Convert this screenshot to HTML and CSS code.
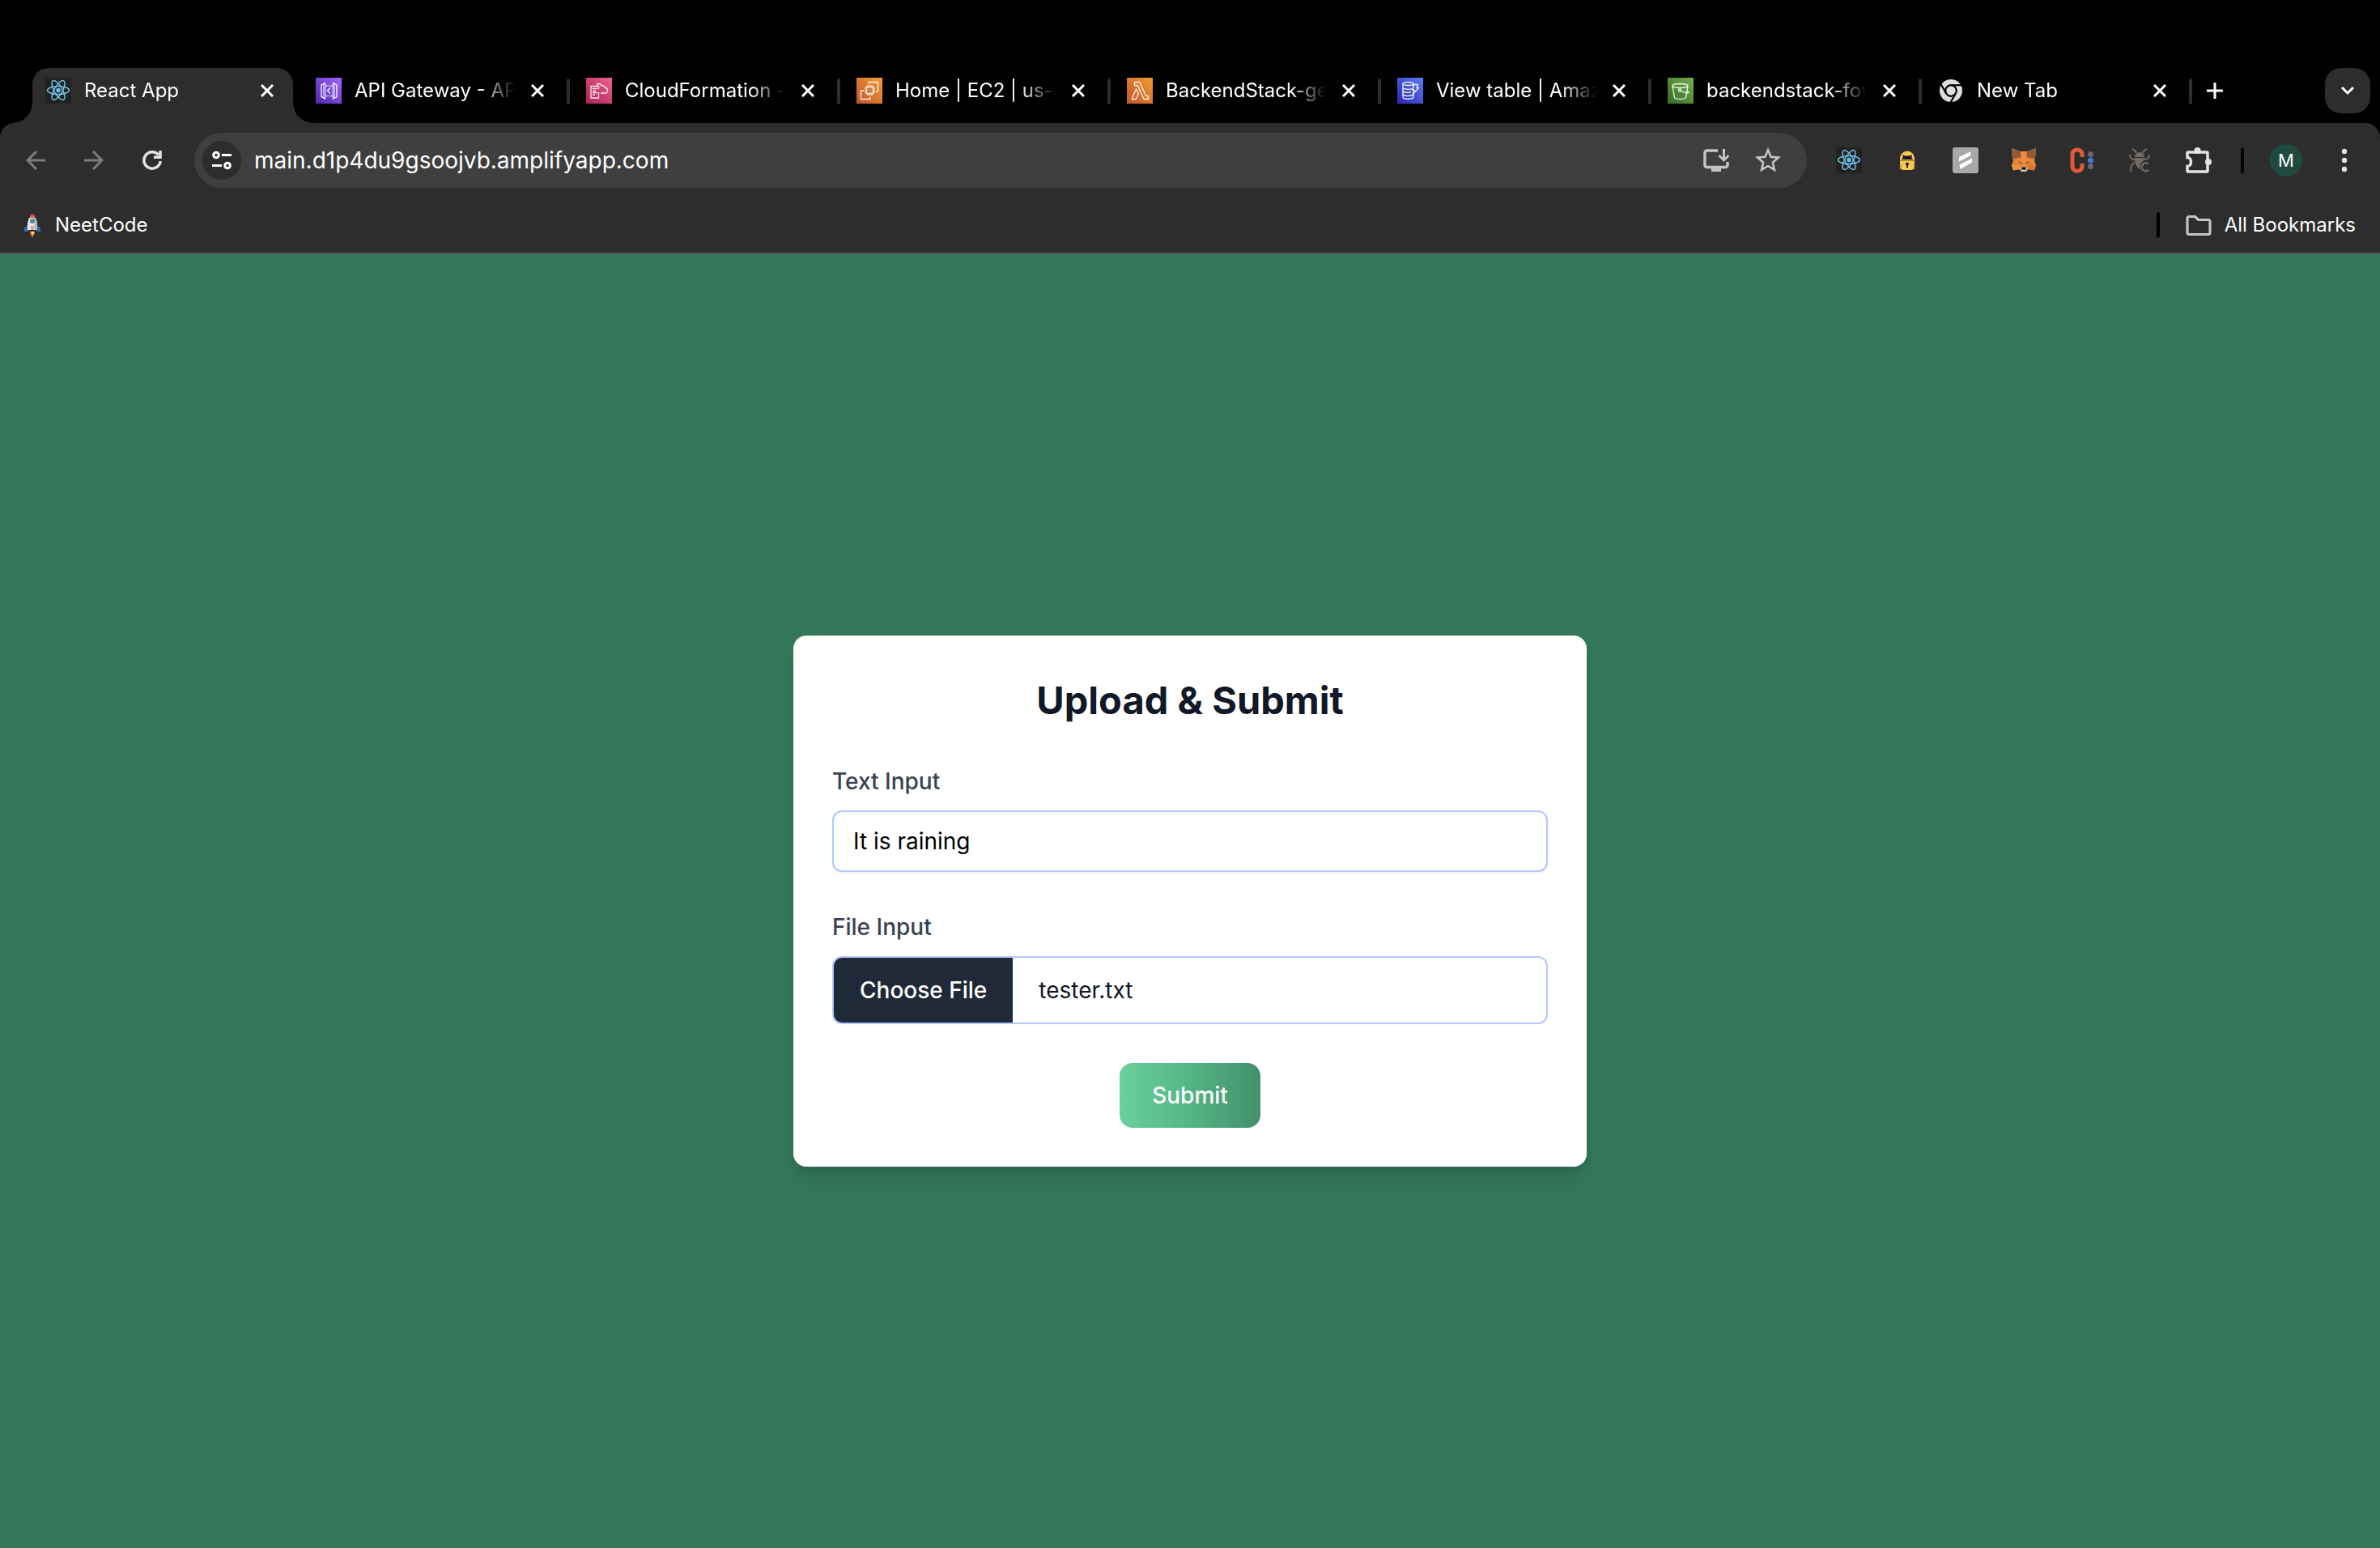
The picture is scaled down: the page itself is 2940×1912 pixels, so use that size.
FILE: index.html
```html
<!DOCTYPE html>
<html lang="en">
<head>
<meta charset="utf-8">
<meta name="viewport" content="width=device-width, initial-scale=1">
<title>React App</title>
<link rel="stylesheet" href="styles.css">
</head>
<body>
<svg class="defs" width="0" height="0" aria-hidden="true">
  <defs>
    <linearGradient id="purple" x1="0" y1="1" x2="1" y2="0"><stop offset="0" stop-color="#4d27a8"/><stop offset="1" stop-color="#a166ff"/></linearGradient>
    <linearGradient id="pink" x1="0" y1="1" x2="1" y2="0"><stop offset="0" stop-color="#a82356"/><stop offset="1" stop-color="#f0608f"/></linearGradient>
    <linearGradient id="orange" x1="0" y1="1" x2="1" y2="0"><stop offset="0" stop-color="#be552e"/><stop offset="1" stop-color="#f79c33"/></linearGradient>
    <linearGradient id="blue" x1="0" y1="1" x2="1" y2="0"><stop offset="0" stop-color="#2e27ad"/><stop offset="1" stop-color="#5a7cfa"/></linearGradient>
    <linearGradient id="green" x1="0" y1="1" x2="1" y2="0"><stop offset="0" stop-color="#356b25"/><stop offset="1" stop-color="#73ad50"/></linearGradient>
    <symbol id="react" viewBox="0 0 32 32">
      <rect width="32" height="32" rx="3" fill="#212121"/>
      <g fill="none" stroke="#6fc3e8" stroke-width="1.500">
        <ellipse cx="16" cy="15.500" rx="13.400" ry="5"/>
        <ellipse cx="16" cy="15.500" rx="13.400" ry="5" transform="rotate(60 16 15.500)"/>
        <ellipse cx="16" cy="15.500" rx="13.400" ry="5" transform="rotate(120 16 15.500)"/>
      </g>
      <circle cx="16" cy="15.500" r="2.700" fill="#6fc3e8"/>
    </symbol>
    <symbol id="cross" viewBox="0 0 16 16"><path d="M1 1 15 15M15 1 1 15" stroke="#fff" stroke-width="3"/></symbol>
  </defs>
</svg>

<header class="browser">
  <nav class="tabs" aria-label="Tabs">
    <div class="tab tab-active">
      <svg class="icon"><use href="#react"/></svg>
      <span class="tab-title">React App</span>
      <button class="tab-close" aria-label="Close tab"><svg class="cross"><use href="#cross"/></svg></button>
    </div>
    <div class="tab">
      <svg class="icon" viewBox="0 0 32 32"><rect width="32" height="32" fill="url(#purple)"/><g fill="none" stroke="#fff" stroke-width="1.300"><path d="M11.500 6.500v19.500l-4.500-2.500V9zM21.500 6.500v19.500l4.500-2.500V9zM18 12.500l-3.500 3.500 3.500 3.500"/><path d="M9.500 8v17M23.500 8v17" stroke-width=".600"/><path d="M13 10h7.500M13 22.500h7.500" stroke-dasharray="1.500 1.500"/></g></svg>
      <span class="tab-title">API Gateway - AP</span>
      <button class="tab-close" aria-label="Close tab"><svg class="cross"><use href="#cross"/></svg></button>
    </div>
    <div class="tab">
      <svg class="icon" viewBox="0 0 32 32"><rect width="32" height="32" fill="url(#pink)"/><g fill="none" stroke="#fff" stroke-opacity=".9" stroke-width="1.300"><path d="M15.500 18v7H6V10.500h9.500V14M8 13.500h6M8 16.500h4M8 18.500h6M8 21h3"/><path d="M13 9.500C13.500 7 18 6.500 19.500 10c1.500-1 3.500 0 3.500 2 2 .300 3.500 1.500 3.500 3.500s-1.500 3.500-3.500 3.500h-5"/></g></svg>
      <span class="tab-title">CloudFormation -</span>
      <button class="tab-close" aria-label="Close tab"><svg class="cross"><use href="#cross"/></svg></button>
    </div>
    <div class="tab">
      <svg class="icon" viewBox="0 0 32 32"><rect width="32" height="32" fill="url(#orange)"/><g fill="none" stroke="#fff" stroke-opacity=".9" stroke-width="1.300"><rect x="12.500" y="11.500" width="8" height="8"/><path d="M14 9v2M16.500 9v2M19 9v2M14 20v2M16.500 20v2M19 20v2M10.500 13h2M10.500 15.500h2M10.500 18h2M21 13h2M21 15.500h2M21 18h2"/><path d="M15 7.500V5.500h11.500V17h-2.500M9 16H5.500v10.500H17V23.500"/></g></svg>
      <span class="tab-title">Home | EC2 | us-e</span>
      <button class="tab-close" aria-label="Close tab"><svg class="cross"><use href="#cross"/></svg></button>
    </div>
    <div class="tab">
      <svg class="icon" viewBox="0 0 32 32"><rect width="32" height="32" fill="url(#orange)"/><g fill="none" stroke="#fff" stroke-opacity=".9" stroke-width="1.300" stroke-linejoin="round"><path d="M9.500 5.500h6.500l7.500 17h3v4h-5.500L13.500 9.500h-4zM11.500 14 6 26.500h5l3.500-7z"/></g></svg>
      <span class="tab-title">BackendStack-ge</span>
      <button class="tab-close" aria-label="Close tab"><svg class="cross"><use href="#cross"/></svg></button>
    </div>
    <div class="tab">
      <svg class="icon" viewBox="0 0 32 32"><rect width="32" height="32" fill="url(#blue)"/><g fill="none" stroke="#fff" stroke-opacity=".95" stroke-width="1.300" stroke-linejoin="round"><ellipse cx="13.500" cy="7.500" rx="6.500" ry="2"/><path d="M7 7.500v16.500c0 3 13 3 13 0v-4M20 7.500v2M7 12c0 2.500 9 3 11 1.500M7 16c0 2.500 8 3 10 1.500M7 20c0 3 11 3 13 .500M21 8.500h4.500L24 12.500h2.500L19.500 20l1.500-5h-2.500z"/></g></svg>
      <span class="tab-title">View table | Amaz</span>
      <button class="tab-close" aria-label="Close tab"><svg class="cross"><use href="#cross"/></svg></button>
    </div>
    <div class="tab">
      <svg class="icon" viewBox="0 0 32 32"><rect width="32" height="32" fill="url(#green)"/><g fill="none" stroke="#fff" stroke-opacity=".95" stroke-width="1.300" stroke-linejoin="round"><ellipse cx="15.500" cy="10" rx="9.500" ry="2.500"/><path d="M6 10l2.500 14.500c1.500 2.500 12.500 2.500 14 0L25 10M16 16c4 2 8 3.500 10 2.500-.500-1.500-1.500-2-2.500-2.500"/><circle cx="15" cy="15.500" r="1.500"/></g></svg>
      <span class="tab-title">backendstack-fov</span>
      <button class="tab-close" aria-label="Close tab"><svg class="cross"><use href="#cross"/></svg></button>
    </div>
    <div class="tab">
      <svg class="icon" viewBox="0 0 32 32"><circle cx="16" cy="16" r="14" fill="#dedede"/><circle cx="16" cy="16" r="6.800" fill="#dedede" stroke="#000" stroke-width="2.200"/><g stroke="#000" stroke-width="2.200"><path d="M16 9.200H30"/><path d="M16 9.200H30" transform="rotate(120 16 16)"/><path d="M16 9.200H30" transform="rotate(240 16 16)"/></g></svg>
      <span class="tab-title">New Tab</span>
      <button class="tab-close" aria-label="Close tab"><svg class="cross"><use href="#cross"/></svg></button>
    </div>
    <button class="new-tab" aria-label="New tab"><svg width="20" height="20" viewBox="0 0 20 20"><path d="M10 0v20M0 10h20" stroke="#fff" stroke-width="3"/></svg></button>
    <button class="tab-search" aria-label="Search tabs"><svg width="16" height="12" viewBox="0 0 16 12"><path d="M1 2l7 7 7-7" fill="none" stroke="#fff" stroke-width="3"/></svg></button>
  </nav>

  <div class="toolbar">
    <button class="tool" aria-label="Back"><svg width="24" height="24" viewBox="0 0 24 24" fill="none" stroke="#7c7c7c" stroke-width="3"><path d="M13 1 2 12l11 11M2 12h22"/></svg></button>
    <button class="tool" aria-label="Forward"><svg width="24" height="24" viewBox="0 0 24 24" fill="none" stroke="#7c7c7c" stroke-width="3"><path d="M11 1l11 11-11 11M22 12H0"/></svg></button>
    <button class="tool" aria-label="Reload"><svg width="24" height="24" viewBox="0 0 24 24" fill="none" stroke="#e3e3e3" stroke-width="3.500"><path d="M22.200 13A10.200 10.200 0 1 1 20 5.500"/><path d="M22 0v8.200h-8"/></svg></button>
    <div class="omnibox">
      <button class="site-info" aria-label="View site information"><svg width="24" height="24" viewBox="0 0 24 24" fill="none" stroke="#fff" stroke-width="3"><circle cx="5" cy="5.500" r="3.300"/><path d="M12 5.500h12M0 18.500h12"/><circle cx="19" cy="18.500" r="3.300"/></svg></button>
      <input class="url" type="text" aria-label="Address" value="main.d1p4du9gsoojvb.amplifyapp.com">
      <button class="omni-action" aria-label="Install app"><svg width="32" height="32" viewBox="0 0 32 32" fill="none" stroke="#c4c4c4" stroke-width="3.500"><path d="M18 4H4.500a2.500 2.500 0 0 0-2.500 2.500V22a2.500 2.500 0 0 0 2.500 2.500h23a2.500 2.500 0 0 0 2.500-2.500V18"/><path d="M25.500 2v13M19.500 10l6 6 6-6" stroke-width="3"/><path d="M10 25h12v5H10z" fill="#c4c4c4" stroke="none"/></svg></button>
      <button class="omni-action" aria-label="Bookmark this tab"><svg width="32" height="32" viewBox="2 2 20 20" fill="#c4c4c4"><path d="M22 9.240l-7.190-.620L12 2 9.190 8.630 2 9.240l5.460 4.730L5.820 21 12 17.270 18.180 21l-1.630-7.030L22 9.240zM12 15.400l-3.760 2.270 1-4.280-3.320-2.880 4.380-.380L12 6.100l1.710 4.040 4.380.380-3.320 2.880 1 4.280L12 15.400z"/></svg></button>
    </div>
    <button class="tool" aria-label="React developer tools"><svg class="icon"><use href="#react"/></svg></button>
    <button class="tool" aria-label="Password lock"><svg class="icon" viewBox="0 0 32 32"><path d="M7 17v-3.500a9 9 0 0 1 18 0V17z" fill="#f2c94b"/><path d="M10.500 9l2.500 1.500h6L21.500 9v4.500l2 1.500h-15l2-1.500z" fill="#1f1430"/><path d="M7 16.300h18" stroke="#8a6d20"/><path d="M7 17h18v5c0 4-2 6-5 6h-8c-3 0-5-2-5-6z" fill="#f2c94b"/><path d="M16 18.500a2 2 0 0 1 1 3.700V25h-2v-2.800a2 2 0 0 1 1-3.700z" fill="#1f1430"/><path d="M7.500 21v6M24.500 21v6" stroke="#b58f35" stroke-width="1.500"/></svg></button>
    <button class="tool" aria-label="Scribe"><svg class="icon" viewBox="0 0 32 32"><rect width="32" height="32" rx="3" fill="#a8a8a8"/><path d="M8 12 22.500 5v5L8 17.500zM8.500 21.500 24 13.500V18.500L9.500 27z" fill="#fff"/></svg></button>
    <button class="tool" aria-label="Wallet"><svg class="icon" viewBox="0 0 32 32"><path d="M1 1l11 4h8l11-4-1 13-1 2 2 6-2 6.500-7-1.500-4 3h-4l-4-3-7 1.500L1 22l2-6-1-2z" fill="#e6853a"/><path d="M1 1l11 4 1 7-9 2-2 0zM31 1 20 5l-1 7 9 2 2 0z" fill="#925a35"/><path d="M12 5h8l-1 10 1 6H12l1-6z" fill="#ea8d3c"/><path d="M9 17.500l4.500 1.500-1 1.500zM23 17.500 18.500 19l1 1.500z" fill="#5c3b30"/><path d="M11 26l2-1.500h6L21 26l-2 4h-6z" fill="#d9c6b5"/><path d="M13.500 24.500h5l.500 3h-6z" fill="#161616"/><path d="M1 22h9l1 5-8 1.500z" fill="#ed9442"/><path d="M31 22h-9l-1 5 8 1.500z" fill="#d8752f"/></svg></button>
    <button class="tool" aria-label="Cookie editor"><svg class="icon" viewBox="0 0 32 32"><path d="M16 12V8.500C16 1 4 1 4 8.500v15C4 31 16 31 16 23.500V20" fill="none" stroke="#e0593a" stroke-width="5"/><circle cx="26.500" cy="8.500" r="3.500" fill="#686868"/><circle cx="26.500" cy="23.500" r="3.500" fill="#686868"/><circle cx="26.500" cy="16" r="3.500" fill="#3d7bd9"/></svg></button>
    <button class="tool" aria-label="Bug tracker"><svg class="icon" viewBox="0 0 32 32"><path d="M9 12a6 6 0 0 1 12 0z" fill="#736a64"/><path d="M8.500 13h13l-2 4c-4 2-5 6-3 11-4-2-8-8-8-15z" fill="#736a64"/><g fill="none" stroke="#736a64" stroke-width="2"><path d="M11 7C10 4 8 3 6 2M19 7c1-3 3-4 5-5M9 15C5 15 3 13 3 9M21 15c4 0 6-2 6-6M9 19c-4 1-5 5-5 11"/></g><path d="M26 20.500a5 5 0 1 0 0 7.500" fill="none" stroke="#736a64" stroke-width="2.500"/></svg></button>
    <button class="tool" aria-label="Extensions"><svg class="icon" viewBox="0 0 32 32"><path d="M4 6h22a1 1 0 0 1 1 1v22a1 1 0 0 1-1 1H3a1 1 0 0 1-1-1v-5.500c6 0 6-11 0-11V7a1 1 0 0 1 1-1z" fill="none" stroke="#e3e3e3" stroke-width="3.500"/><circle cx="14.500" cy="4" r="4" fill="#e3e3e3"/><circle cx="28" cy="18" r="4" fill="#e3e3e3"/></svg></button>
    <span class="divider"></span>
    <button class="tool" aria-label="Profile"><span class="avatar">M</span></button>
    <button class="tool" aria-label="Menu"><svg width="8" height="32" viewBox="0 0 8 32" fill="#e3e3e3"><circle cx="4" cy="5" r="3.200"/><circle cx="4" cy="16" r="3.200"/><circle cx="4" cy="27" r="3.200"/></svg></button>
  </div>

  <nav class="bookmarks" aria-label="Bookmarks">
    <a class="bookmark" href="#neetcode">
      <svg class="icon" viewBox="0 0 32 32"><path d="M10 16h12l4 4v4h-4l-2-2h-8l-2 2H6v-4z" fill="#2f6fc0"/><path d="M16 1l3 4H13z" fill="#b93a32"/><path d="M13 4h6v3h-6z" fill="#e0604f"/><path d="M12 7h8l2 6v9H10v-9z" fill="#e6e3e3"/><path d="M18 7h2l2 6v9h-3z" fill="#b5b5b9"/><circle cx="16" cy="11" r="3" fill="#5e8797"/><path d="M14 17h4v5h-4z" fill="#dfa09c"/><path d="M13 24h6l-1 4-2 3-2-3z" fill="#e78d33"/><path d="M15 24h3v3h-3z" fill="#ffd87a"/></svg>
      <span>NeetCode</span>
    </a>
    <span class="divider"></span>
    <button class="bookmark">
      <svg class="icon" viewBox="0 0 32 32"><path d="M4 5.500h7.500l4 4H28a2 2 0 0 1 2 2v14a2 2 0 0 1-2 2H4a2 2 0 0 1-2-2v-18a2 2 0 0 1 2-2z" fill="none" stroke="#c4c4c4" stroke-width="3.200"/></svg>
      <span>All Bookmarks</span>
    </button>
  </nav>
</header>

<main class="page">
  <form class="card">
    <h1 class="card-title">Upload &amp; Submit</h1>
    <div class="field">
      <label class="label" for="text-input">Text Input</label>
      <input class="control text-control" id="text-input" type="text" value="It is raining">
    </div>
    <div class="field">
      <label class="label" for="file-input">File Input</label>
      <input class="control file-control" id="file-input" type="file">
    </div>
    <button class="submit" type="button">Submit</button>
  </form>
</main>
<script src="script.js"></script>
</body>
</html>
```

FILE: styles.css
```css
* {
  box-sizing: border-box;
}

body {
  margin: 0;
  min-height: 100vh;
  display: flex;
  flex-direction: column;
  background: #34775b;
  font-family: Inter, "Liberation Sans", sans-serif;
  font-size: 24px;
  line-height: 32px;
}

button,
input {
  margin: 0;
  padding: 0;
  border: 0;
  background: none;
  color: inherit;
  font: inherit;
}

svg {
  display: block;
  flex: none;
}

.defs {
  position: absolute;
}

.icon {
  width: 32px;
  height: 32px;
}

/* Browser chrome */

.browser {
  background: #000;
  color: #fff;
}

.tabs {
  display: flex;
  align-items: flex-start;
  padding: 84px 12px 0 34px;
}

.tab {
  position: relative;
  flex: 0 1 334px;
  min-width: 0;
  height: 68px;
  display: flex;
  align-items: center;
  padding: 0 14px 12px 22px;
}

.tab:not(.tab-active)::after {
  content: "";
  position: absolute;
  top: 13px;
  right: -2px;
  width: 4px;
  height: 32px;
  border-radius: 2px;
  background: #2d2d2d;
}

.tab-active::before {
  content: "";
  position: absolute;
  inset: 0 6px;
  border-radius: 20px 20px 0 0;
  background: #2d2d2d;
}

/* Concave feet that join the active tab to the toolbar */
.tab-active::after {
  content: "";
  position: absolute;
  left: -18px;
  right: -18px;
  bottom: 0;
  height: 24px;
  background:
    radial-gradient(circle at 0 0, transparent 23px, #2d2d2d 24px) left / 24px 24px no-repeat,
    radial-gradient(circle at 100% 0, transparent 23px, #2d2d2d 24px) right / 24px 24px no-repeat;
}

.tab-active > * {
  position: relative;
  z-index: 1;
}

.tab-title {
  flex: 1;
  min-width: 0;
  margin: 0 4px 0 16px;
  overflow: hidden;
  white-space: nowrap;
  -webkit-mask-image: linear-gradient(to right, #000 78%, transparent 100%);
  mask-image: linear-gradient(to right, #000 78%, transparent 100%);
}

.tab-close,
.new-tab,
.tab-search,
.tool,
.site-info,
.omni-action {
  display: flex;
  flex: none;
  align-items: center;
  justify-content: center;
}

.tab-close {
  width: 48px;
  height: 48px;
}

.cross {
  width: 16px;
  height: 16px;
}

.new-tab {
  width: 56px;
  height: 56px;
  margin-left: 2px;
}

.tab-search {
  width: 56px;
  height: 56px;
  margin-left: auto;
  border-radius: 20px;
  background: #2d2d2d;
}

.toolbar {
  display: flex;
  align-items: center;
  height: 92px;
  padding: 0 8px;
  border-radius: 18px 18px 0 0;
  background: #2d2d2d;
}

.tool {
  width: 72px;
  height: 68px;
}

.omnibox {
  flex: 1;
  min-width: 0;
  height: 68px;
  display: flex;
  align-items: center;
  margin: 0 16px;
  padding: 0 16px 0 10px;
  border-radius: 34px;
  background: #3f3f3f;
}

.site-info {
  width: 48px;
  height: 48px;
  border-radius: 50%;
  background: #2d2d2d;
}

.url {
  flex: 1;
  min-width: 0;
  height: 48px;
  padding: 0 16px;
  font-size: 28px;
}

.omni-action {
  width: 64px;
  height: 64px;
}

.divider {
  flex: none;
  width: 4px;
  height: 32px;
  margin: 0 16px;
  border-radius: 2px;
  background: #000;
}

.avatar {
  width: 40px;
  height: 40px;
  border-radius: 50%;
  background: #1f4a3f;
  font-size: 22px;
  line-height: 40px;
  text-align: center;
}

.bookmarks {
  display: flex;
  align-items: center;
  justify-content: flex-end;
  height: 70px;
  padding: 0 14px 0 8px;
  border-bottom: 2px solid #565656;
  background: #2d2d2d;
}

.bookmark {
  display: flex;
  align-items: center;
  gap: 12px;
  padding: 0 16px;
  color: inherit;
  text-decoration: none;
}

a.bookmark {
  margin-right: auto;
}

button.bookmark {
  gap: 16px;
}

/* Page */

.page {
  flex: 1;
  display: flex;
  align-items: center;
  justify-content: center;
  padding: 48px;
}

.card {
  width: 100%;
  max-width: 980px;
  display: flex;
  flex-direction: column;
  gap: 48px;
  padding: 48px;
  border-radius: 16px;
  background: #fff;
  box-shadow: 0 20px 30px -6px rgba(0, 0, 0, 0.1), 0 8px 12px -4px rgba(0, 0, 0, 0.1);
  font-size: 28px;
  line-height: 40px;
}

.card-title {
  margin: 0;
  color: #111827;
  font-size: 47px;
  font-weight: 700;
  line-height: 64px;
  text-align: center;
}

.field {
  display: flex;
  flex-direction: column;
  gap: 16px;
}

.label {
  color: #374151;
  font-weight: 500;
}

.control {
  width: 100%;
  border: 2px solid #b4c6fc;
  border-radius: 12px;
  background: #fff;
}

.text-control {
  height: 76px;
  padding: 0 24px;
  color: #000;
  box-shadow: 0 2px 4px rgba(0, 0, 0, 0.05);
}

.file-control {
  height: 84px;
  overflow: hidden;
  color: #111827;
  line-height: 80px;
}

.file-control::file-selector-button {
  height: 80px;
  margin: 0 32px 0 0;
  padding: 0 32px;
  border: 0;
  background: #1f2937;
  color: #fff;
  font: inherit;
  font-weight: 500;
}

.submit {
  align-self: center;
  height: 80px;
  padding: 0 40px;
  border-radius: 16px;
  background: linear-gradient(to right, #6ad09d, #54b585 50%, #43906b);
  color: #fff;
  font-weight: 500;
}
```

FILE: script.js
```js
// Preselect the sample file so the picker shows its name.
const picked = new DataTransfer();
picked.items.add(new File(["It is raining"], "tester.txt", { type: "text/plain" }));
document.getElementById("file-input").files = picked.files;
```
